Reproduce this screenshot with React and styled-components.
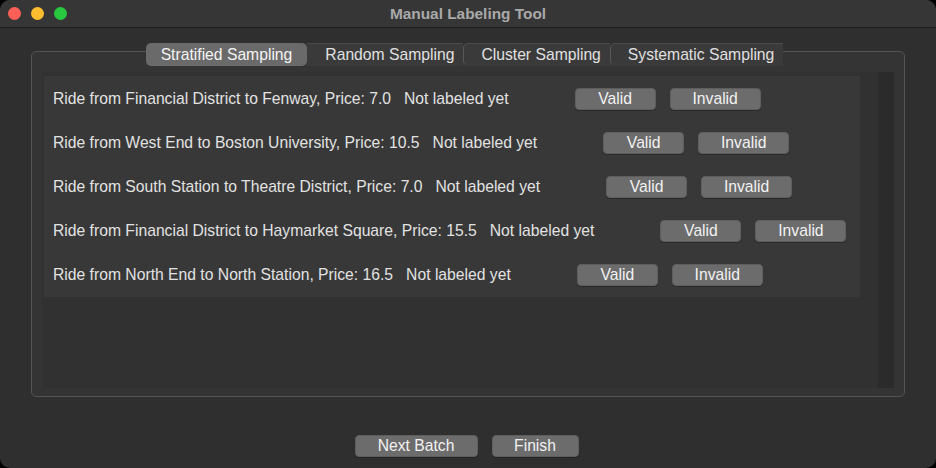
import React from 'react'
import styled, { createGlobalStyle } from 'styled-components'

const GlobalStyle = createGlobalStyle`
  html, body {
    margin: 0;
    padding: 0;
    background: #000;
  }
  * {
    box-sizing: border-box;
  }
`

const Window = styled.div`
  width: 936px;
  height: 468px;
  display: flex;
  flex-direction: column;
  background: #2f2f2f;
  border-radius: 10px;
  overflow: hidden;
  font-family: "Liberation Sans", Arial, sans-serif;
  font-size: 15.7px;
  color: #e2e2e2;
`

const TitleBar = styled.div`
  height: 28px;
  flex: none;
  display: flex;
  align-items: center;
  position: relative;
  background: #363636;
  border-bottom: 1px solid #1c1c1c;
`

const Lights = styled.div`
  display: flex;
  gap: 10px;
  padding-left: 8px;
`

const Light = styled.span`
  width: 13px;
  height: 13px;
  border-radius: 50%;
  background: ${p => p.color};
`

const Title = styled.div`
  position: absolute;
  left: 0;
  right: 0;
  text-align: center;
  font-weight: bold;
  font-size: 15.4px;
  color: #a9a9a9;
  pointer-events: none;
`

const Body = styled.div`
  flex: 1;
  display: flex;
  flex-direction: column;
  padding: 23px 31px 0;
`

const Group = styled.section`
  height: 346px;
  display: flex;
  flex-direction: column;
  border: 1px solid #545454;
  border-radius: 5px;
  background: #343434;
  padding: 0 10px 8px 10px;
`

const TabBar = styled.div`
  display: flex;
  justify-content: center;
  margin-top: -9px;
  margin-right: 7px;
`

const Tab = styled.div`
  height: 23px;
  display: flex;
  align-items: center;
  padding: ${p => (p.active ? '0 15px 0 14px' : '0 9px 0 17px')};
  background: ${p => (p.active ? '#6a6a6a' : '#3a3a3a')};
  color: ${p => (p.active ? '#f4f4f4' : '#e0e0e0')};
  border-top: 1px solid ${p => (p.active ? '#6a6a6a' : '#4c4c4c')};
  border-left: 1px solid ${p => (p.edge ? '#575757' : 'transparent')};
  border-radius: ${p => (p.active ? '5px' : p.edge ? '5px 0 0 5px' : '0')};
  white-space: nowrap;
`

const ScrollArea = styled.div`
  flex: 1;
  margin-top: 6px;
  display: flex;
  background: #313131;
`

const Content = styled.div`
  flex: 1;
  padding: 4px 18px 0 2px;
`

const Rows = styled.div`
  display: flex;
  flex-direction: column;
  padding-top: 1px;
  background: #383838;
`

const Row = styled.div`
  height: 44px;
  display: flex;
  align-items: center;
  padding-left: 9px;
`

const Ride = styled.span`
  white-space: nowrap;
`

const Status = styled.span`
  margin-left: 13px;
  white-space: nowrap;
`

const Actions = styled.div`
  display: flex;
  gap: 14px;
  margin-left: ${p => p.offset}px;
`

const Button = styled.button`
  width: ${p => p.w}px;
  height: 22px;
  padding: 0;
  border: 1px solid #5e5e5e;
  border-radius: 4px;
  background: #6c6c6c;
  color: #f2f2f2;
  font-family: inherit;
  font-size: 15.7px;
  box-shadow: 0 1px 0 rgba(0, 0, 0, 0.25);
`

const Scrollbar = styled.div`
  width: 16px;
  background: #2b2b2b;
`

const Footer = styled.div`
  display: flex;
  justify-content: center;
  gap: 14px;
  margin-top: 38px;
  padding-right: 3px;
`

const rides = [
  ['Financial District', 'Fenway', '7.0'],
  ['West End', 'Boston University', '10.5'],
  ['South Station', 'Theatre District', '7.0'],
  ['Financial District', 'Haymarket Square', '15.5'],
  ['North End', 'North Station', '16.5'],
]

const tabs = ['Stratified Sampling', 'Random Sampling', 'Cluster Sampling', 'Systematic Sampling']

const App = () => (
  <Window>
    <GlobalStyle />
    <TitleBar>
      <Lights>
        <Light color="#fe5f57" />
        <Light color="#febc2e" />
        <Light color="#28c840" />
      </Lights>
      <Title>Manual Labeling Tool</Title>
    </TitleBar>
    <Body>
      <Group>
        <TabBar>
          {tabs.map((t, i) => (
            <Tab key={t} active={i === 0} edge={i > 1}>
              {t}
            </Tab>
          ))}
        </TabBar>
        <ScrollArea>
          <Content>
            <Rows>
              {rides.map(([from, to, price]) => (
                <Row key={from + to}>
                  <Ride>
                    Ride from {from} to {to}, Price: {price}
                  </Ride>
                  <Status>Not labeled yet</Status>
                  <Actions offset={66}>
                    <Button w={81}>Valid</Button>
                    <Button w={91}>Invalid</Button>
                  </Actions>
                </Row>
              ))}
            </Rows>
          </Content>
          <Scrollbar />
        </ScrollArea>
      </Group>
      <Footer>
        <Button w={123}>Next Batch</Button>
        <Button w={87}>Finish</Button>
      </Footer>
    </Body>
  </Window>
)

export default App
